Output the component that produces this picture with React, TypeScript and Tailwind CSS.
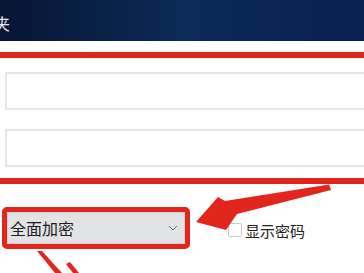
// App — password dialog crop: dark title bar, two text inputs, encryption select and show-password checkbox, with red annotation marks.
import React from 'react';

const cjk = { fontFamily: '"Noto Sans CJK SC", "Noto Sans", sans-serif' };

const Annotations: React.FC = () => (
  <svg
    className="absolute inset-0 pointer-events-none"
    width="364"
    height="273"
    viewBox="0 0 364 273"
    aria-hidden="true"
  >
    {/* arrow pointing at the select */}
    <polygon
      points="196,222 218,197 225,201 329,184.5 331,190 237,214 226,230"
      fill="#e3261d"
    />
    {/* arrow coming up from below */}
    <polygon points="37,251 42,251 62,273 55,273" fill="#e3261d" />
    <polygon points="66,264 70,262 79,273 73,273" fill="#e3261d" />
  </svg>
);

const App: React.FC = () => {
  return (
    <div className="relative w-[364px] h-[273px] overflow-hidden bg-white" style={cjk}>
      {/* Title bar */}
      <header className="h-[41px] flex items-center pt-[5px] bg-gradient-to-r from-[#061532] via-[#0b2b58] to-[#082150]">
        <span className="-ml-[6px] text-[16px] leading-none text-white/90">夹</span>
      </header>

      {/* Marked input group */}
      <section className="mt-[11px] border-y-[6px] border-[#e3261d] pt-[14px] pb-[11px] flex flex-col gap-[19px]">
        <div className="ml-[5px] h-[38px] border-2 border-r-0 border-[#e6e7e9] bg-white" />
        <div className="ml-[5px] h-[38px] border-2 border-r-0 border-[#e6e7e9] bg-white" />
      </section>

      {/* Options row */}
      <div className="mt-[23px] flex items-center">
        <div className="ml-[2px] w-[188px] h-[42px] rounded-[5px] border-[5px] border-[#e3261d]">
          <div className="h-full flex items-center justify-between bg-[#e2e3e5] border border-[#d0d1d3] pl-[2px] pr-[6px]">
            <span className="text-[16px] leading-none text-[#1e1e1e]">全面加密</span>
            <svg width="10" height="6" viewBox="0 0 10 6" aria-hidden="true">
              <path d="M1 1l4 4 4-4" fill="none" stroke="#6b6b6b" strokeWidth="1" />
            </svg>
          </div>
        </div>
        <label className="ml-[38px] mt-[4px] flex items-center gap-[3px]">
          <span className="w-[14px] h-[14px] rounded-[2px] border border-[#c9cacc] bg-white" />
          <span className="text-[15px] leading-none text-[#222]">显示密码</span>
        </label>
      </div>

      <Annotations />
    </div>
  );
};

export default App;
